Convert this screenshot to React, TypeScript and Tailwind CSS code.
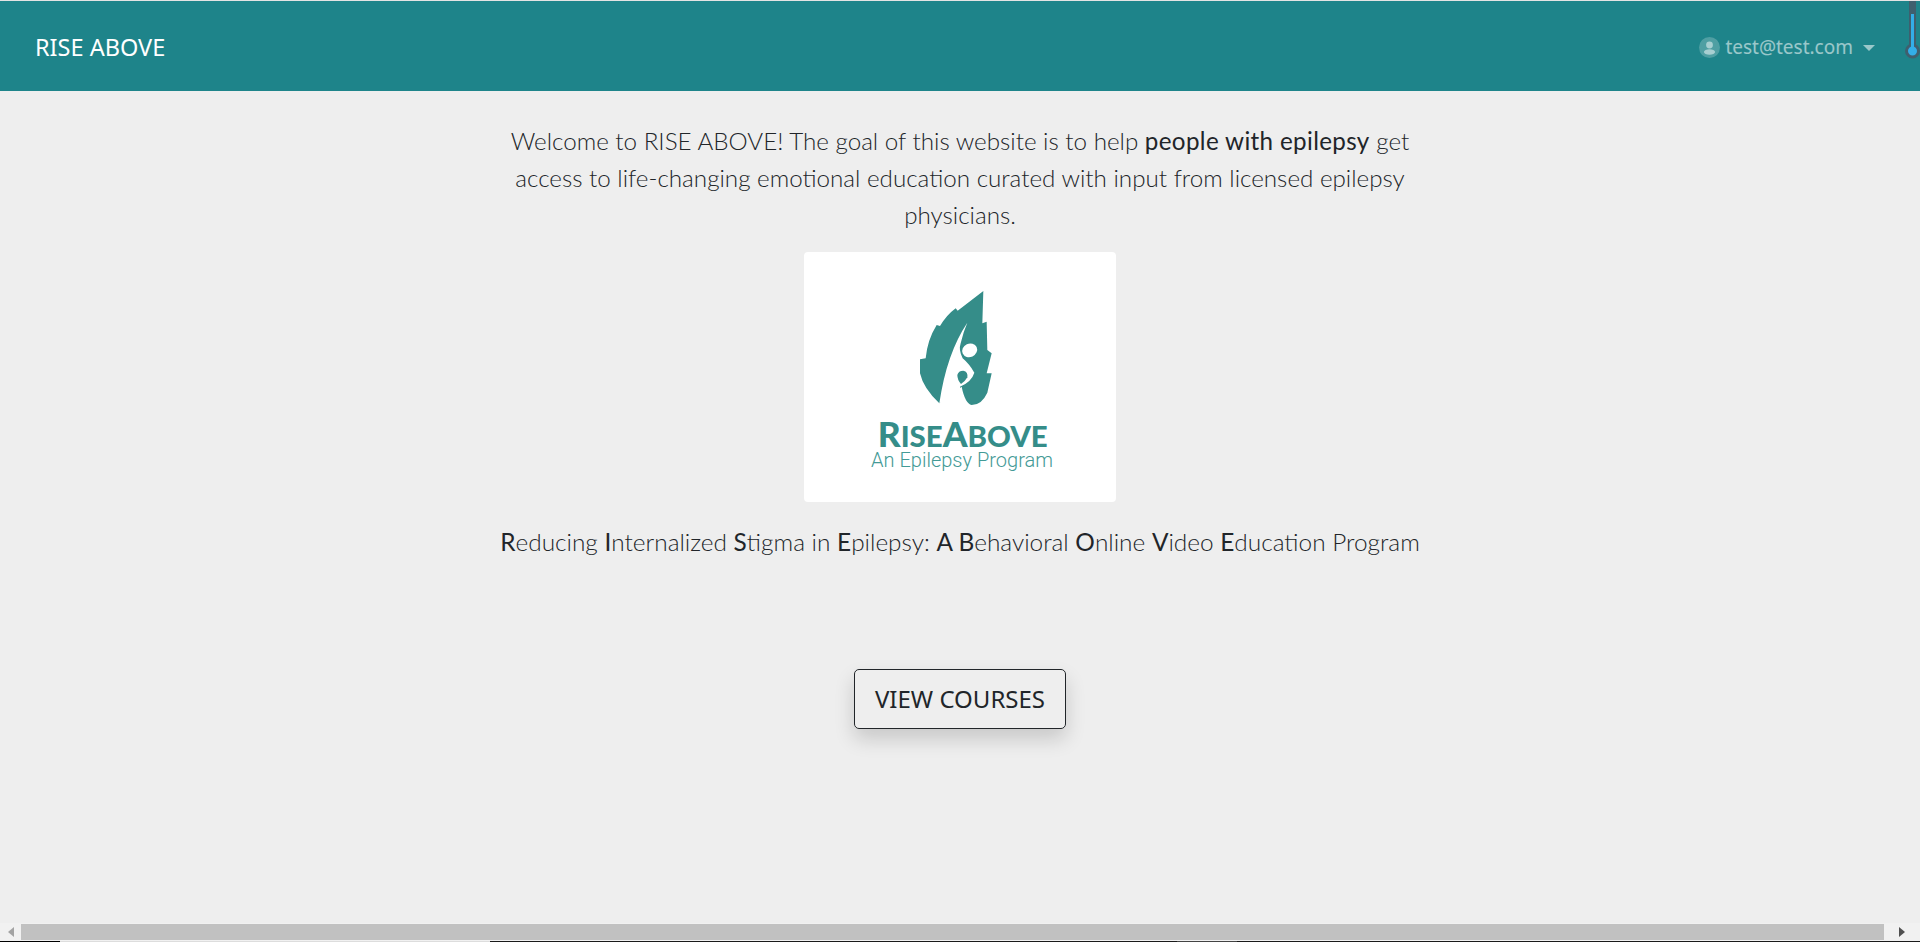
import React from "react";

const bodyFont = { fontFamily: '"Noto Sans", sans-serif' };
const lightFont = { fontFamily: 'Lato, sans-serif' };

function UserIcon() {
  return (
    <svg width="21" height="21" viewBox="0 0 21 21" className="shrink-0">
      <circle cx="10.5" cy="10.5" r="10.5" fill="#ffffff" fillOpacity="0.22" />
      <circle cx="10.5" cy="8" r="3.4" fill="#ffffff" fillOpacity="0.5" />
      <ellipse cx="10.5" cy="15" rx="5.6" ry="2.8" fill="#ffffff" fillOpacity="0.5" />
    </svg>
  );
}

function Logo() {
  return (
    <svg viewBox="42 36 936 750" className="w-[312px] h-[250px] block bg-white rounded-sm">
      {/* flame */}
      <path
        fill="#358d89"
        d="M580 153 L577 250 L590 245 L592 330 L605 340 L590 400 L605 400 L592 458 Q575 495 545 495 Q525 490 515 440 L448 490 Q400 445 390 400 L390 358 L407 355 Q412 300 440 255 L450 258 Q470 225 497 205 L503 212 Z"
      />
      {/* swoosh */}
      <path
        fill="#ffffff"
        d="M532 248 Q470 340 448 490 L512 470 L510 440 Q545 425 553 398 Q538 372 518 355 Q505 330 512 310 Q520 275 532 248 Z"
      />
      <ellipse cx="539" cy="331" rx="23" ry="20" fill="#ffffff" transform="rotate(-25 539 331)" />
      <path fill="#358d89" d="M502 405 Q505 392 520 392 Q535 395 532 412 Q525 425 513 432 Q502 420 502 405 Z" />
      <text x="263" y="620" fontFamily="Lato, sans-serif" fontWeight="900" fontSize="100" fill="#358d89" textLength="510" lengthAdjust="spacingAndGlyphs">
        R<tspan fontSize="83">ISE</tspan>A<tspan fontSize="83">BOVE</tspan>
      </text>
      <text x="243" y="682" fontFamily="Roboto, sans-serif" fontSize="58" fill="#439a96" textLength="546" lengthAdjust="spacingAndGlyphs">
        An Epilepsy Program
      </text>
    </svg>
  );
}

function ScrollArrow({ dir, color }: { dir: "left" | "right"; color: string }) {
  return (
    <svg width="6" height="10" viewBox="0 0 6 10" fill={color}>
      {dir === "left" ? <path d="M6 0 V10 L0 5 Z" /> : <path d="M0 0 V10 L6 5 Z" />}
    </svg>
  );
}

export default function App() {
  return (
    <div className="h-screen flex flex-col overflow-hidden bg-[#eeeeee] text-[#212529]" style={bodyFont}>
      <header className="relative h-[91px] shrink-0 border-t border-t-[#e4e4e4] bg-[#1e848a] flex items-center justify-between pt-[3px] pl-[35px] pr-[45px]">
        <span className="text-[23.5px] text-white">RISE ABOVE</span>
        <div className="flex items-center gap-[5px] text-[19px] text-white/55">
          <UserIcon />
          <span>test@test.com</span>
          <span className="ml-[5px] w-0 h-0 border-x-[6px] border-x-transparent border-t-[6px] border-t-white/55" />
        </div>
        <div className="absolute top-0 right-0 w-[16px] h-[60px]">
          <svg width="16" height="60" viewBox="0 0 16 60">
            <rect x="5" y="-2" width="7" height="50" fill="#3f5f6e" />
            <circle cx="8.5" cy="50" r="6" fill="#33aee8" stroke="#3f5f6e" strokeWidth="3" />
            <rect x="7" y="13" width="3" height="36" fill="#33aee8" />
          </svg>
        </div>
      </header>

      <main className="flex-1 flex flex-col items-center font-light">
        <p className="w-[920px] mt-[31px] text-center text-[24.2px] leading-[37px] font-light" style={lightFont}>
          Welcome to RISE ABOVE! The goal of this website is to help{" "}
          <span className="font-normal tracking-[0.35px]">people with epilepsy</span> get access to life-changing emotional
          education curated with input from licensed epilepsy physicians.
        </p>
        <div className="mt-[19px]">
          <Logo />
        </div>
        <p className="mt-[21px] text-[24.4px] leading-[37px] font-light" style={lightFont}>
          <b className="font-normal">R</b>educing <b className="font-normal">I</b>nternalized{" "}
          <b className="font-normal">S</b>tigma in <b className="font-normal">E</b>pilepsy:{" "}
          <b className="font-normal">A B</b>ehavioral <b className="font-normal">O</b>nline{" "}
          <b className="font-normal">V</b>ideo <b className="font-normal">E</b>ducation Program
        </p>
        <button className="mt-[109px] w-[212px] h-[60px] rounded-[5px] border border-[#212529] text-[24px] font-normal shadow-[0_10px_20px_rgba(0,0,0,0.16)]">
          VIEW COURSES
        </button>
      </main>

      <div className="h-[17px] shrink-0 flex items-center pt-px bg-[#f1f1f1]">
        <div className="w-[21px] flex justify-center">
          <ScrollArrow dir="left" color="#a3a3a3" />
        </div>
        <div className="flex-1 h-full bg-[#c1c1c1]" />
        <div className="w-[36px] flex justify-center">
          <ScrollArrow dir="right" color="#505050" />
        </div>
      </div>
      <div className="h-px shrink-0 bg-[#f1f1f1]" />
      <div className="h-px shrink-0 flex bg-[#1a1a1a]">
        <div className="w-[60px] bg-black" />
        <div className="w-[430px] bg-[#dddddd]" />
        <div className="w-[687px]" />
        <div className="w-[60px] bg-[#444444]" />
      </div>
    </div>
  );
}
